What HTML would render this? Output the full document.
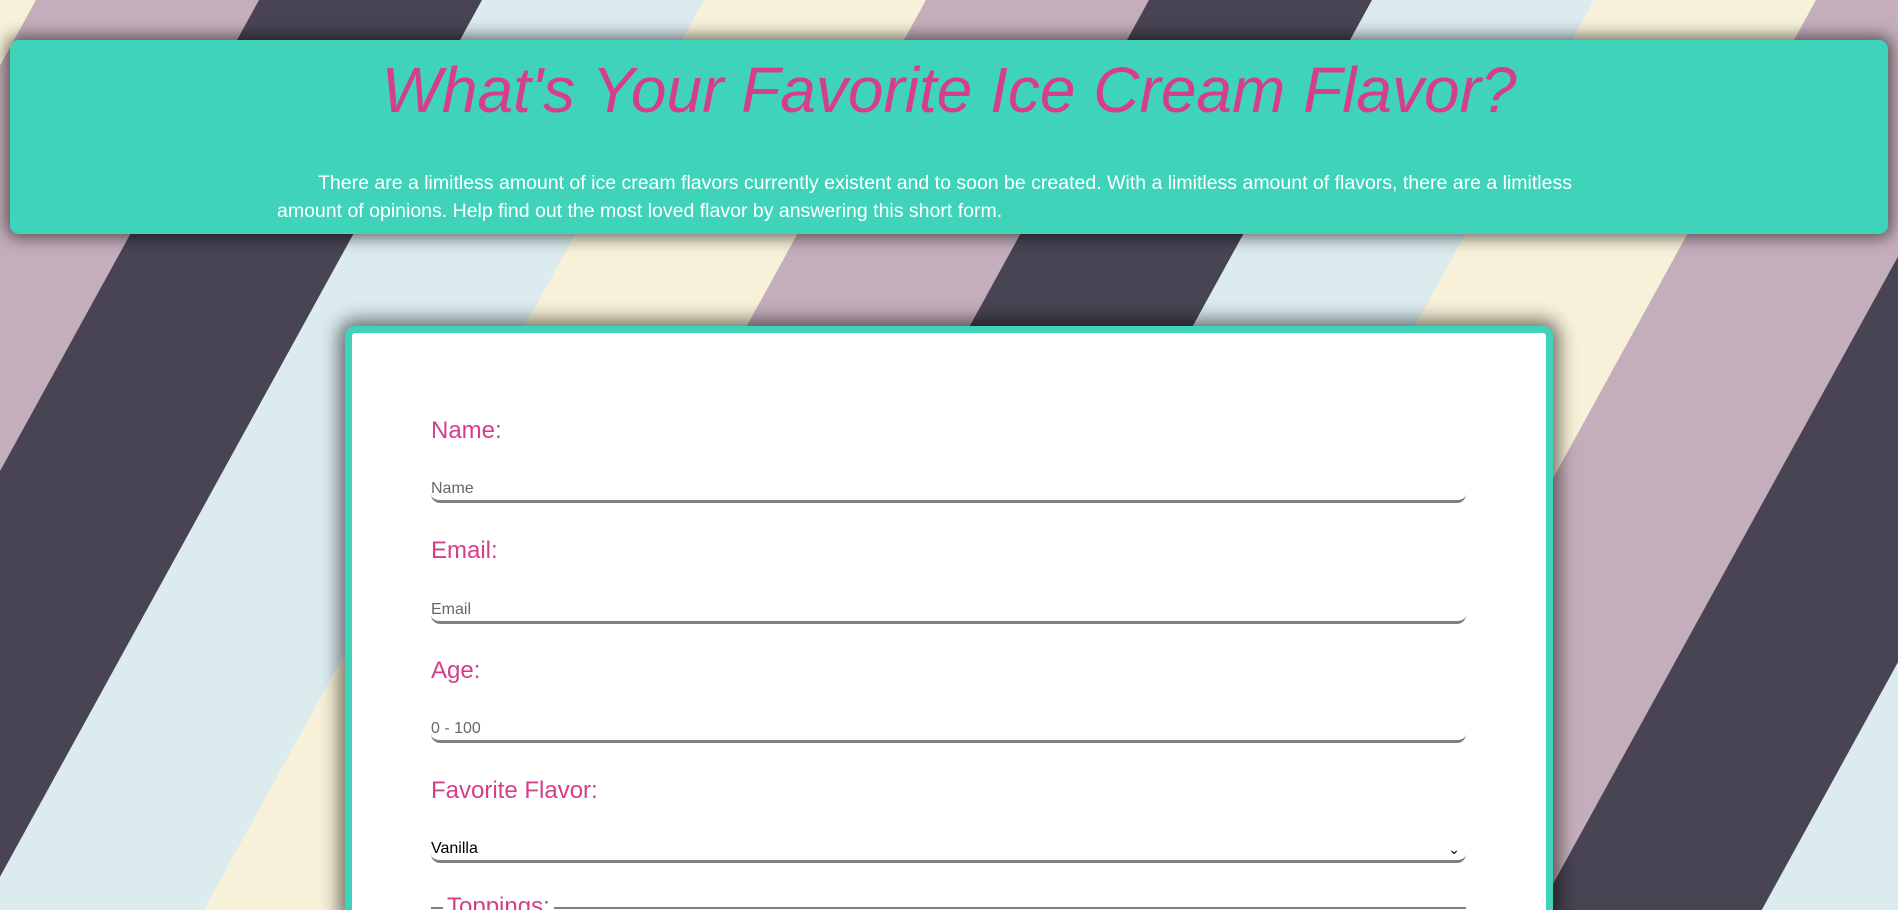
<!DOCTYPE html>
<html><head><meta charset="utf-8"><style>
html,body{margin:0;padding:0;width:1898px;height:910px;overflow:hidden;font-family:"Liberation Sans",sans-serif;}
#wrap{position:relative;width:1898px;height:910px;overflow:hidden;}
#bg{position:absolute;left:0;top:0;}
.header{position:absolute;left:10px;top:40px;width:1878px;height:194px;background:#3fd4ba;border-radius:9px;box-shadow:0 0 16px 4px rgba(0,0,0,.55);}
.header h1{margin:0;position:absolute;top:10px;left:0;width:100%;text-align:center;font-style:italic;font-weight:normal;font-size:64px;line-height:80px;color:#d63f87;}
.header p{position:absolute;top:129px;left:267px;width:1345px;margin:0;color:#fff;font-size:19.5px;line-height:28px;text-indent:41px;}
.card{position:absolute;left:345px;top:326px;width:1194px;height:584px;background:#fff;border:7px solid #3fd4ba;border-bottom:0;border-radius:10px 10px 0 0;box-shadow:0 0 18px 6px rgba(0,0,0,.55);overflow:hidden;}
.lbl{position:absolute;left:79px;color:#d63f87;font-size:24px;}
.inp{position:absolute;left:79px;width:1035px;height:22px;border-bottom:3px solid #808080;border-radius:0 0 9px 9px;color:#666;font-size:16px;line-height:22px;}
.sel{color:#000;}
.sel span{position:absolute;right:6px;top:0;font-size:14px;}
.fs{position:absolute;left:79px;top:574px;width:1035px;border-top:2px solid #808080;}
.fs span{position:absolute;left:12px;top:-16px;background:#fff;padding:0 4px;color:#d63f87;font-size:24px;}
</style></head><body><div id="wrap">
<svg id="bg" width="1898" height="910">
<defs><pattern id="st" patternUnits="userSpaceOnUse" width="890" height="910" patternTransform="skewX(-28.8)">
<rect x="0" y="0" width="36" height="910" fill="#f7f1d9"/>
<rect x="36" y="0" width="223" height="910" fill="#c5aebb"/>
<rect x="259" y="0" width="223" height="910" fill="#484453"/>
<rect x="482" y="0" width="222" height="910" fill="#dbebee"/>
<rect x="704" y="0" width="186" height="910" fill="#f7f1d9"/>
</pattern></defs>
<rect width="1898" height="910" fill="url(#st)"/>
</svg>
<div class="header">
<h1>What's Your Favorite Ice Cream Flavor?</h1>
<p>There are a limitless amount of ice cream flavors currently existent and to soon be created. With a limitless amount of flavors, there are a limitless amount of opinions. Help find out the most loved flavor by answering this short form.</p>
</div>
<div class="card">
<div class="lbl" style="top:84px">Name:</div>
<div class="inp" style="top:145px">Name</div>
<div class="lbl" style="top:204px">Email:</div>
<div class="inp" style="top:266px">Email</div>
<div class="lbl" style="top:324px">Age:</div>
<div class="inp" style="top:385px">0 - 100</div>
<div class="lbl" style="top:444px">Favorite Flavor:</div>
<div class="inp sel" style="top:505px">Vanilla<span>&#8964;</span></div>
<div class="fs"><span>Toppings:</span></div>
</div>
</div></body></html>
